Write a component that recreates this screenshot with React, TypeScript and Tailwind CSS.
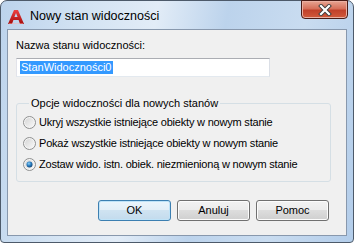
import React from "react";

const font = { fontFamily: '"Liberation Sans", Arial, sans-serif' };

function Radio({ checked }: { checked?: boolean }) {
  return (
    <svg width="13" height="13" viewBox="0 0 13 13" className="shrink-0">
      <defs>
        <linearGradient id="rg" x1="0" y1="0" x2="1" y2="1">
          <stop offset="0" stopColor="#d6d6d6" />
          <stop offset="1" stopColor="#f8f8f8" />
        </linearGradient>
        <radialGradient id="dot" cx="0.4" cy="0.35" r="0.7">
          <stop offset="0" stopColor="#8fd0f5" />
          <stop offset="0.5" stopColor="#2a7ec2" />
          <stop offset="1" stopColor="#0f3e6d" />
        </radialGradient>
      </defs>
      <circle cx="6.5" cy="6.5" r="6" fill="#f5f5f5" stroke="#8e8f8f" strokeWidth="1" />
      <circle cx="6.5" cy="6.5" r="4.5" fill="url(#rg)" />
      {checked && <circle cx="6.5" cy="6.5" r="3" fill="url(#dot)" />}
    </svg>
  );
}

function Btn({ label, def }: { label: string; def?: boolean }) {
  return (
    <div
      className={
        "w-[73px] h-[21px] rounded-[3px] border flex items-center justify-center text-[11px] text-black " +
        (def
          ? "border-[#3c7fb1] bg-[linear-gradient(#eaf5fc_0%,#e2eef7_50%,#cfe3f1_50%,#c3dbed_100%)] shadow-[inset_0_0_0_1px_#bfe3f8]"
          : "border-[#707070] bg-[linear-gradient(#f2f2f2_0%,#ebebeb_50%,#dddddd_50%,#cfcfcf_100%)] shadow-[inset_0_0_0_1px_#fcfcfc]")
      }
    >
      {label}
    </div>
  );
}

export default function App() {
  return (
    <div className="w-[354px] h-[243px] bg-white" style={font}>
      <div className="w-[354px] h-[243px] rounded-t-[7px] rounded-b-[4px] border border-[#4d5a6a] bg-[linear-gradient(100deg,#bcd3ec_0%,#d3e3f3_22%,#e2ecf7_40%,#bcd3ec_58%,#c9dcf0_78%,#b3cdea_100%)] flex flex-col">
        <div className="h-[28px] flex items-start shrink-0">
          <svg width="16" height="14" viewBox="0 0 16 14" className="ml-[7px] mt-[9px] shrink-0">
            <defs>
              <linearGradient id="ag" x1="0" y1="0" x2="0" y2="1">
                <stop offset="0" stopColor="#f04040" />
                <stop offset="1" stopColor="#a40d0d" />
              </linearGradient>
            </defs>
            <path d="M6 0 L10 0 L16 14 L12 14 L10.6 10 L5.4 10 L4 14 L0 14 Z M6.4 7 L9.6 7 L8 3 Z" fill="url(#ag)" fillRule="evenodd" />
            <path d="M1 13.5 L15 13.5" stroke="#ffb0b0" strokeWidth="0.8" opacity="0.6" />
          </svg>
          <div className="ml-[6px] mt-[7px] text-[12.5px] text-black leading-[16px]">
            Nowy stan widoczności
          </div>
          <div className="ml-auto mr-[5px] w-[47px] h-[19px] -mt-[1px] rounded-b-[4px] border border-[#4a1c16] bg-[linear-gradient(#e8a593_0%,#d6705a_45%,#c1412a_55%,#d15a3c_100%)] shadow-[inset_0_0_0_1px_#eab0a2] flex items-center justify-center">
            <svg width="14" height="12" viewBox="0 0 14 12">
              <path d="M3 2 L11 10 M11 2 L3 10" stroke="#3d3d3d" strokeWidth="4" strokeLinecap="square" />
              <path d="M3 2 L11 10 M11 2 L3 10" stroke="#ffffff" strokeWidth="2.2" strokeLinecap="square" />
            </svg>
          </div>
        </div>
        <div className="mx-[6px] h-[207px] border border-[#8898ad] bg-[#f0f0f0] flex flex-col text-[11px] text-black">
          <div className="ml-[8px] mt-[9px] leading-[13px]">Nazwa stanu widoczności:</div>
          <div className="ml-[8px] mt-[6px] w-[254px] h-[19px] bg-white border border-[#abadb3] border-b-[#e3e9ef] border-l-[#e2e3ea] border-r-[#dbdfe6] flex items-center pl-[3px]">
            <span className="bg-[#3399ff] text-white leading-[13px] px-[1px]">StanWidoczności0</span>
          </div>
          <fieldset className="ml-[8px] mt-[20px] w-[315px] h-[85px] border border-[#d5dfe5] rounded-[3px] pl-[6px] pt-[6px] flex flex-col">
            <legend className="ml-[6px] px-[2px] leading-[13px]">Opcje widoczności dla nowych stanów</legend>
            <div className="flex flex-col gap-[8px] tracking-[-0.2px]">
              <div className="flex items-center gap-[3px] h-[13px]">
                <Radio />
                <span>Ukryj wszystkie istniejące obiekty w nowym stanie</span>
              </div>
              <div className="flex items-center gap-[3px] h-[13px]">
                <Radio />
                <span>Pokaż wszystkie istniejące obiekty w nowym stanie</span>
              </div>
              <div className="flex items-center gap-[3px] h-[13px]">
                <Radio checked />
                <span>Zostaw wido. istn. obiek. niezmienioną w nowym stanie</span>
              </div>
            </div>
          </fieldset>
          <div className="mt-[18px] ml-[90px] flex gap-[6px]">
            <Btn label="OK" def />
            <Btn label="Anuluj" />
            <Btn label="Pomoc" />
          </div>
        </div>
      </div>
    </div>
  );
}
